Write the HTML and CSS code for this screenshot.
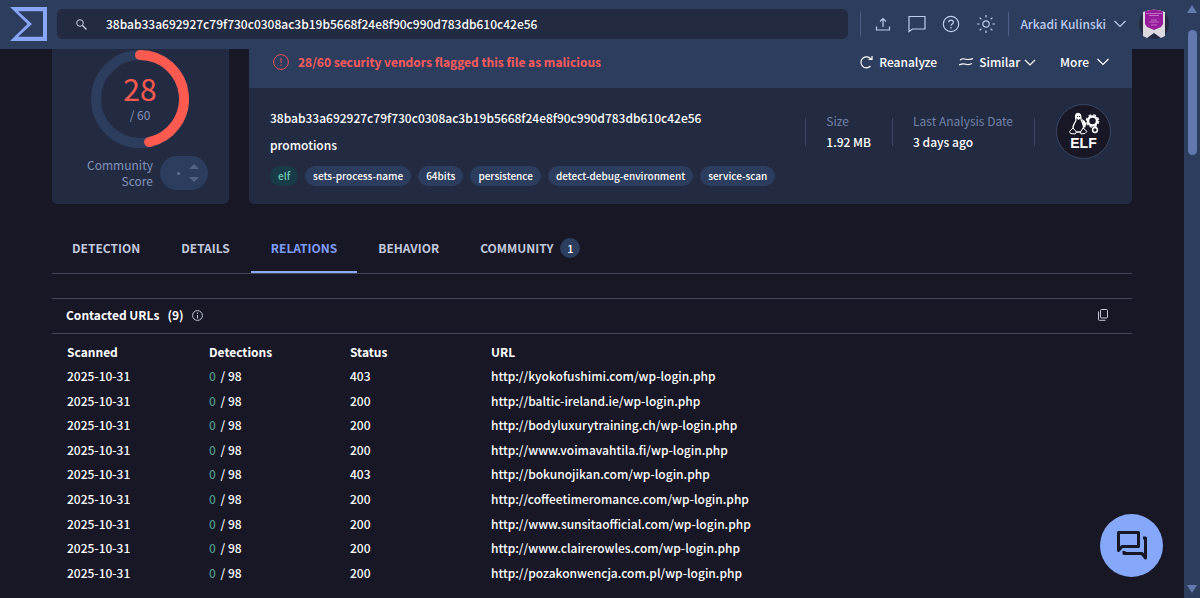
FILE: index.html
```html
<!DOCTYPE html>
<html lang="en">
<head>
<meta charset="utf-8">
<title>File report</title>
<link rel="stylesheet" href="styles.css">
</head>
<body>
<div class="page">
<header class="topbar">
  <a class="logo" href="#" aria-label="Home">
    <svg width="38" height="34" viewBox="0 0 38 34"><path d="M0 0H37V34H0L17.500 17ZM8 4.200L22 17L8 29.800H33V4.200Z" fill="#89a6f8" fill-rule="evenodd"/></svg>
  </a>
  <form class="search">
    <svg width="11" height="11" viewBox="0 0 11 11" fill="none" stroke="#c9d2e8"><circle cx="4" cy="4" r="3.300"/><path d="M6.500 6.500L10.500 10.500" stroke-width="1.300"/></svg>
    <input type="text" aria-label="Search" value="38bab33a692927c79f730c0308ac3b19b5668f24e8f90c990d783db610c42e56">
  </form>
  <div class="tools">
    <button aria-label="Upload"><svg width="18" height="18" viewBox="0 0 18 18"><path d="M9 12V4M6 6.500L9 3.500L12 6.500M2.500 11.500V15H15.500V11.500"/></svg></button>
    <button aria-label="Comments"><svg width="18" height="18" viewBox="0 0 18 18"><path d="M1 1.500H17V14H4.500L1 16.500Z"/></svg></button>
    <button aria-label="Help"><svg width="18" height="18" viewBox="0 0 18 18"><circle cx="9" cy="9" r="7.700"/><path d="M6.700 7.200C6.700 4.300 11.400 4.300 11.400 7.200C11.400 9 9 9 9 10.800M9 12V13.400"/></svg></button>
    <button aria-label="Theme"><svg width="20" height="20" viewBox="0 0 20 20"><circle cx="10" cy="10" r="3.200"/><path d="M10 1V3.500M10 16.500V19M1 10H3.500M16.500 10H19M3.600 3.600L5.400 5.400M14.600 14.600L16.400 16.400M3.600 16.400L5.400 14.600M14.600 5.400L16.400 3.600"/></svg></button>
  </div>
  <button class="user">Arkadi Kulinski <svg width="12" height="8" viewBox="0 0 12 8"><path d="M.5 1L6 6.500L11.500 1"/></svg></button>
  <svg class="avatar" width="30" height="32" viewBox="0 0 30 32"><circle cx="15" cy="16" r="15" fill="#252a42"/><path d="M4 4Q15 -1 26 4V28L22 30L15 25L8 30L4 28Z" fill="#dcd9df"/><path d="M6 3.500Q15 0 24 3.500V16L22 19L15 22L8 19L6 16Z" fill="#961c9c"/><path d="M7 5.500H23M10 7.500H20M12 12H18M10 14H20M12 17H18" stroke="#c569c6"/></svg>
</header>
<main class="content">
  <section class="summary">
    <div class="card score">
      <div class="gauge">
        <svg width="98" height="98" viewBox="0 0 98 98" fill="none" stroke-width="10"><circle cx="49" cy="49" r="44" stroke="#2d3d5d"/><path d="M49 5A44 44 0 0 1 58.150 92.040" stroke="#ff5a50" stroke-linecap="round"/></svg>
        <div class="gauge-text"><strong>28</strong><span>/ 60</span></div>
      </div>
      <div class="community">
        <span>Community<br>Score</span>
        <div class="votes"><i></i><svg width="10" height="20" viewBox="0 0 10 20" fill="#536283"><path d="M0 6L5 1L10 6ZM0 14L5 19L10 14Z"/></svg></div>
      </div>
    </div>
    <div class="card report">
      <div class="banner">
        <svg width="16" height="16" viewBox="0 0 16 16" fill="none" stroke="#e8525c"><circle cx="8" cy="8" r="7.400"/><path d="M8 4V9M8 10.500V12"/></svg>
        <strong>28/60 security vendors flagged this file as malicious</strong>
        <div class="actions">
          <button><svg width="13" height="14" viewBox="0 0 13 14"><path d="M10.500 11A5.500 5.500 0 1 1 11 4.200M12 1V4.500H8.500"/></svg>Reanalyze</button>
          <button class="similar"><svg width="14" height="10" viewBox="0 0 14 10"><path d="M1 3C3 1.500 5 1.500 7 2.200S11 2.500 14 1.500M0 8C3 6.500 5 6.500 7 7.200S11 7.500 13 6.500"/></svg>Similar<svg class="caret" width="12" height="8" viewBox="0 0 12 8"><path d="M1 2L6 7L11 2"/></svg></button>
          <button class="more">More <svg width="12" height="8" viewBox="0 0 12 8"><path d="M.5 1L6 6.500L11.500 1"/></svg></button>
        </div>
      </div>
      <div class="details">
        <div class="identity">
          <div>38bab33a692927c79f730c0308ac3b19b5668f24e8f90c990d783db610c42e56</div>
          <div>promotions</div>
          <div class="tags"><a class="elf" href="#">elf</a><a href="#">sets-process-name</a><a href="#">64bits</a><a href="#">persistence</a><a href="#">detect-debug-environment</a><a href="#">service-scan</a></div>
        </div>
        <dl class="facts">
          <div><dt>Size</dt><dd>1.92 MB</dd></div>
          <div><dt>Last Analysis Date</dt><dd>3 days ago</dd></div>
        </dl>
        <div class="filetype">
          <svg width="32" height="24" viewBox="0 0 32 24" fill="none" stroke="#fff"><path d="M8 8C7 4 7.500 1.500 10 1.500S13 4 13 7C13.500 10 16 12 15.500 17L13 20H7L5 17C4.500 12 7.500 11 8 8Z" stroke-width="1.300"/><path d="M7.500 3.500Q10 -1 13 3.500V6L10.500 8L8 6Z" fill="#fff" stroke="none"/><path d="M9.500 4V5M11.500 4V5" stroke="#171726"/><path d="M5 16L1.500 19.500L2.500 21.500L7 22L8.500 20ZM15 16L19 19.500L17 21.500L13 22L12.500 20Z" fill="#171726"/><path d="M14 7Q20 10 17 16L15.500 14Z" fill="#fff" stroke="none"/><circle cx="24.500" cy="9" r="4.500" stroke-width="2.500"/><circle cx="24.500" cy="9" r="6.200" stroke-width="1.200" stroke-dasharray="2.800 2.070"/><circle cx="27" cy="18" r="2.400" fill="#171726" stroke-width="1.500"/></svg>
          <b>ELF</b>
        </div>
      </div>
    </div>
  </section>
  <nav class="tabs"><a href="#">DETECTION</a><a href="#">DETAILS</a><a class="active" href="#" aria-current="page">RELATIONS</a><a href="#">BEHAVIOR</a><a href="#">COMMUNITY <span>1</span></a></nav>
  <section class="urls">
    <h2>Contacted URLs <span>(9)</span>
      <svg width="11" height="11" viewBox="0 0 11 11" fill="none" stroke="#c5cad8"><circle cx="5.500" cy="5.500" r="4.900"/><path d="M5.500 5V8.500M5.500 2.500V3.800"/></svg>
      <button aria-label="Copy"><svg width="10" height="12" viewBox="0 0 10 12" fill="none" stroke="#c5cad8"><rect x="2.500" y=".5" width="7" height="8.500" rx="1"/><path d="M.5 2.500V10.500Q.5 11.300 1.500 11.300H7.500"/></svg></button>
    </h2>
    <table>
      <thead><tr><th>Scanned</th><th>Detections</th><th>Status</th><th>URL</th></tr></thead>
      <tbody>
        <tr><td>2025-10-31</td><td><i>0</i> / 98</td><td>403</td><td><a href="#">http://kyokofushimi.com/wp-login.php</a></td></tr>
        <tr><td>2025-10-31</td><td><i>0</i> / 98</td><td>200</td><td><a href="#">http://baltic-ireland.ie/wp-login.php</a></td></tr>
        <tr><td>2025-10-31</td><td><i>0</i> / 98</td><td>200</td><td><a href="#">http://bodyluxurytraining.ch/wp-login.php</a></td></tr>
        <tr><td>2025-10-31</td><td><i>0</i> / 98</td><td>200</td><td><a href="#">http://www.voimavahtila.fi/wp-login.php</a></td></tr>
        <tr><td>2025-10-31</td><td><i>0</i> / 98</td><td>403</td><td><a href="#">http://bokunojikan.com/wp-login.php</a></td></tr>
        <tr><td>2025-10-31</td><td><i>0</i> / 98</td><td>200</td><td><a href="#">http://coffeetimeromance.com/wp-login.php</a></td></tr>
        <tr><td>2025-10-31</td><td><i>0</i> / 98</td><td>200</td><td><a href="#">http://www.sunsitaofficial.com/wp-login.php</a></td></tr>
        <tr><td>2025-10-31</td><td><i>0</i> / 98</td><td>200</td><td><a href="#">http://www.clairerowles.com/wp-login.php</a></td></tr>
        <tr><td>2025-10-31</td><td><i>0</i> / 98</td><td>200</td><td><a href="#">http://pozakonwencja.com.pl/wp-login.php</a></td></tr>
      </tbody>
    </table>
  </section>
</main>
</div>
<div class="rail" aria-hidden="true">
  <svg width="10" height="8" viewBox="0 0 10 8"><path d="M5 0L10 8H0Z"/></svg>
  <span class="thumb"></span>
  <svg class="down" width="10" height="8" viewBox="0 0 10 8"><path d="M5 8L0 0H10Z"/></svg>
</div>
<button class="chat" aria-label="Chat"><svg width="30" height="30" viewBox="0 0 30 30" fill="none" stroke="#171726" stroke-width="3" stroke-linejoin="round"><path d="M1.500 1.500H21.500V15.500H5L1.500 19.500Z"/><path d="M26 7H28.500V27L25 22.500H7V20"/></svg></button>
</body>
</html>
```
FILE: styles.css
```css
* { box-sizing: border-box; }
body {
  margin: 0;
  min-height: 100vh;
  display: grid;
  grid-template-columns: minmax(0, 1fr) 16px;
  background: #171726;
  color: #fff;
  font: 500 12px/18px "Noto Sans CJK SC", "Noto Sans", sans-serif;
}
a { color: inherit; text-decoration: none; }
button { display: flex; align-items: center; padding: 0; border: 0; background: none; color: inherit; font: inherit; }
svg { display: block; flex: none; }
.topbar { display: flex; align-items: center; height: 49px; padding: 0 15px 1px 10px; background: #2d3d5d; color: #bccbf0; }
.search { display: flex; align-items: center; gap: 19px; flex: 1; height: 30px; margin-left: 9px; padding: 0 19px; border-radius: 5px; background: #232b42; }
.search input { flex: 1; min-width: 0; padding: 0; border: 0; background: none; color: #fff; font: inherit; outline: 0; }
.topbar button svg, .actions svg { fill: none; stroke: currentColor; stroke-width: 1.2; }
.tools { display: flex; align-items: center; gap: 16px; height: 24px; margin-left: 12px; padding: 0 12px 0 13px; border: solid #4b5f89; border-width: 0 1px; }
.user { gap: 8px; margin: 0 13px 0 11px; }
.content { padding: 0 52px; }
.summary { display: grid; grid-template-columns: 177px minmax(0, 1fr); gap: 20px; }
.card { overflow: hidden; border-radius: 0 0 5px 5px; background: #232b42; }
.score { display: flex; flex-direction: column; align-items: center; padding: 1px 0 14px; color: #8493b9; font-weight: 400; }
.gauge { display: grid; place-items: center; padding-right: 1px; }
.gauge > * { grid-area: 1 / 1; }
.gauge-text { display: flex; flex-direction: column; align-items: center; padding-bottom: 4px; }
.gauge strong { color: #ff5a50; font-size: 30px; font-weight: 400; line-height: 36px; }
.community { display: flex; align-items: center; gap: 7px; margin-top: 8px; padding-left: 14px; text-align: right; line-height: 16px; }
.votes { display: flex; align-items: center; justify-content: space-between; width: 48px; height: 34px; padding: 0 9px 0 17px; border-radius: 17px; background: #2d3d5d; }
.votes i { width: 3px; height: 3px; border-radius: 50%; background: #63749c; }
.banner { display: flex; align-items: center; gap: 9px; padding: 4px 23px 17px 24px; background: #2d3d5d; color: #ff5a5f; }
.actions { display: flex; gap: 22px; margin-left: auto; color: #fff; }
.actions button { gap: 6px; }
.similar .caret { margin-left: -2px; }
.more { margin-left: 2px; }
.more svg { margin-left: 2px; }
.details { display: flex; padding: 16px 21px 18px; }
.identity { display: flex; flex-direction: column; gap: 9px; flex: 1; min-width: 0; padding-top: 5px; }
.tags { display: flex; flex-wrap: wrap; gap: 7px; margin-top: 3px; font-size: 10px; line-height: 20px; white-space: nowrap; }
.tags a { padding: 0 8px; border-radius: 10px; background: #2d3d5d; }
.tags .elf { background: #193b48; color: #6fc9b4; }
.facts { display: flex; gap: 21px; height: 28px; margin: 14px 21px 0 0; border-right: 1px solid #3a4664; }
.facts div { margin-top: -6px; padding: 0 0 0 21px; position: relative; }
.facts div:last-child { padding-right: 21px; }
.facts div::before { content: ""; position: absolute; left: 0; top: 6px; height: 28px; border-left: 1px solid #3a4664; }
.facts dt { color: #7482a6; margin-bottom: 3px; font-weight: 400; }
.facts dd { margin: 0; }
.filetype { display: flex; flex-direction: column; align-items: center; width: 55px; height: 55px; padding-top: 7px; border: 1px solid #3a4664; border-radius: 50%; background: #171726; }
.filetype b { font: bold 14px/14px "Liberation Sans", sans-serif; }
.tabs { display: flex; gap: 1px; margin-top: 23px; border-bottom: 1px solid #45485b; color: #c1c8dc; font-weight: 700; }
.tabs a { display: flex; align-items: center; gap: 7px; height: 46px; padding: 0 20px 4px; }
.tabs .active { border-bottom: 2px solid #8da8f5; padding-bottom: 2px; color: #7f9df8; }
.tabs span { width: 20px; border-radius: 10px; background: #2d3d5d; color: #fff; text-align: center; line-height: 20px; font-size: 11px; font-weight: 500; }
.urls { margin-top: 24px; }
.urls h2 { display: flex; align-items: center; gap: 8px; height: 36px; margin: 0; padding: 0 24px 2px 14px; border: solid #45485b; border-width: 1px 0; font-size: 12px; }
.urls h2 button { margin-left: auto; }
table { width: 100%; height: 245px; margin-top: 6px; border-collapse: collapse; table-layout: fixed; }
th, td { padding: 3px 0 3px 15px; text-align: left; }
th:not(:last-child) { width: 141px; }
th:first-child { width: 142px; }
td i { margin-right: 2px; color: #4c9989; font-style: normal; }
.rail { display: flex; flex-direction: column; align-items: center; padding: 5px 0; background: #2d3d5d; }
.rail svg { fill: #6478b0; }
.thumb { width: 9px; height: 125px; margin-top: 17px; border-radius: 5px; background: #6478b0; }
.rail .down { margin-top: auto; }
.chat { position: fixed; right: 37px; bottom: 21px; justify-content: center; width: 63px; height: 63px; border-radius: 50%; background: #86a8fb; }
```
